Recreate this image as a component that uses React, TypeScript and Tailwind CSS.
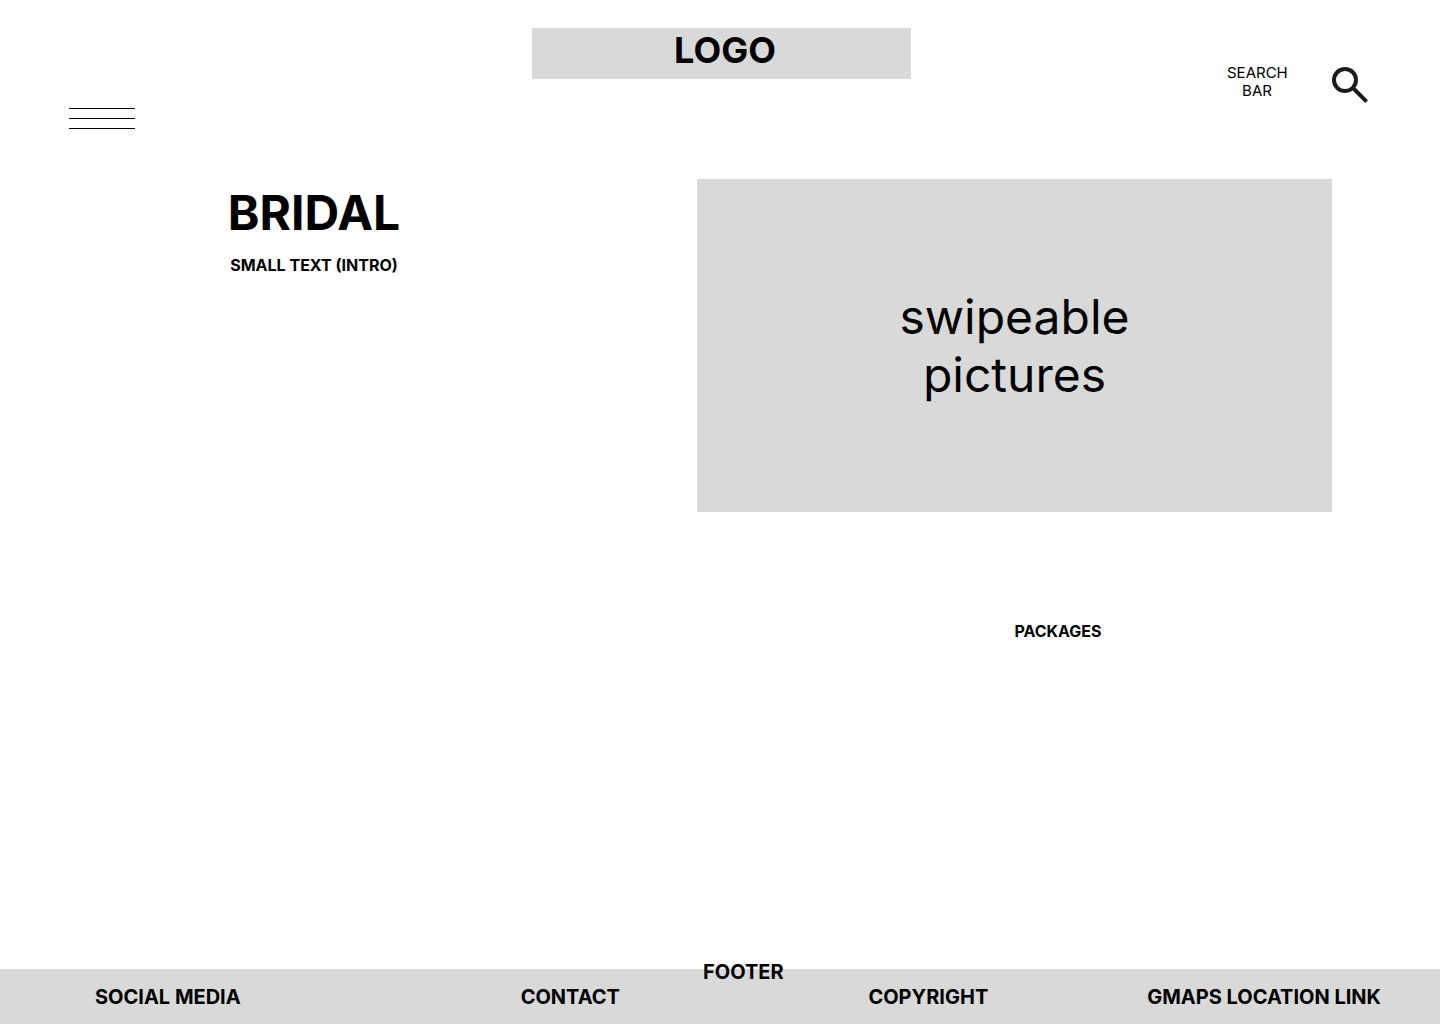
const footerLinks = 'text-xl leading-6 font-bold whitespace-nowrap';

export default function App() {
  return (
    <div className="flex min-h-screen flex-col bg-white font-['Inter',sans-serif] text-black">
      <header className="grid grid-cols-[1fr_379px_1fr] items-start pt-7">
        <button type="button" aria-label="Open menu" className="mt-20 ml-[69px] flex w-[66px] flex-col gap-[9px]">
          <span className="h-px w-full bg-black" />
          <span className="h-px w-full bg-black" />
          <span className="h-px w-full bg-black" />
        </button>
        <a href="#home" className="ml-px h-[51px] w-[379px] bg-[#d9d9d9] pl-2 text-center text-4xl leading-[44px] font-bold">
          LOGO
        </a>
        <div className="mt-9 mr-[72px] flex items-start justify-end gap-[45px]">
          <span className="w-[60px] text-center text-[15px] leading-[18px]">SEARCH BAR</span>
          <button type="button" aria-label="Search" className="mt-[3px]">
            <svg viewBox="120 -840 720 720" className="size-9" fill="#1d1b20">
              <path d="M784-120 532-372q-30 24-69 38t-83 14q-109 0-184.5-75.5T120-580q0-109 75.5-184.5T380-840q109 0 184.5 75.5T640-580q0 44-14 83t-38 69l252 252-56 56ZM380-400q75 0 127.5-52.5T560-580q0-75-52.5-127.5T380-760q-75 0-127.5 52.5T200-580q0 75 52.5 127.5T380-400Z" />
            </svg>
          </button>
        </div>
      </header>
      <main className="mt-[50px] grid grow grid-cols-[628px_1fr] items-start gap-[69px] pr-[108px]">
        <section className="pt-1 text-center">
          <h1 className="text-5xl leading-[60px] font-bold">BRIDAL</h1>
          <p className="mt-3 text-base leading-5 font-bold">SMALL TEXT (INTRO)</p>
        </section>
        <section className="text-center">
          <div className="flex h-[333px] items-center justify-center bg-[#d9d9d9] text-5xl leading-[58px]">
            <p className="pt-px">
              swipeable
              <br />
              pictures
            </p>
          </div>
          <h2 className="mt-[109px] pl-[87px] text-base leading-5 font-bold">PACKAGES</h2>
        </section>
      </main>
      <footer className="relative grid h-[55px] grid-cols-[426fr_348fr_279fr_233fr] items-start bg-[#d9d9d9] pt-4 pr-[59px] pl-[95px]">
        <a href="#social" className={footerLinks}>SOCIAL MEDIA</a>
        <a href="#contact" className={footerLinks}>CONTACT</a>
        <span className="absolute -top-[9px] left-1/2 -ml-[17px] text-xl leading-6 font-bold">FOOTER</span>
        <a href="#copyright" className={footerLinks}>COPYRIGHT</a>
        <a href="#map" className={footerLinks}>GMAPS LOCATION LINK</a>
      </footer>
    </div>
  );
}
